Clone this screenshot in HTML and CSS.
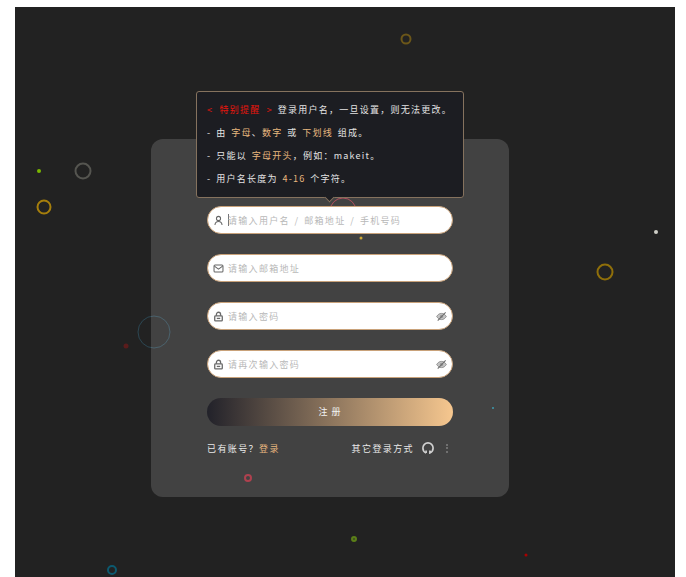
FILE: index.html
```html
<!DOCTYPE html>
<html lang="zh-CN">
<head>
<meta charset="utf-8">
<title>注册</title>
<link rel="stylesheet" href="styles.css">
</head>
<body>
<main class="screen">
  <span class="bubble b1"></span><span class="bubble b2"></span><span class="bubble b3"></span>
  <span class="bubble b4"></span><span class="bubble b5"></span><span class="bubble b6"></span>
  <span class="bubble b7"></span><span class="bubble b8"></span><span class="bubble b9"></span>
  <span class="bubble b10"></span><span class="bubble b11"></span><span class="bubble b12"></span>
  <span class="bubble b13"></span><span class="bubble b14"></span><span class="bubble b15"></span>
  <span class="bubble b16"></span>

  <section class="card">
    <div class="tip">
      <p><span class="red">&lt; 特别提醒 &gt;</span> 登录用户名，一旦设置，则无法更改。</p>
      <p>- 由 <span class="gold">字母</span>、<span class="gold">数字</span> 或 <span class="gold">下划线</span> 组成。</p>
      <p>- 只能以 <span class="gold">字母开头</span>，例如：makeit。</p>
      <p>- 用户名长度为 <span class="gold">4-16</span> 个字符。</p>
    </div>
    <form class="form">
      <div class="field">
        <svg class="icon" viewBox="0 0 16 16"><circle cx="8" cy="5" r="3"/><path d="M2.8 14.5c.3-3.2 2.4-5 5.2-5s4.900 1.800 5.200 5"/></svg>
        <span class="caret"></span><span class="ph">请输入用户名 / 邮箱地址 / 手机号码</span>
      </div>
      <div class="field">
        <svg class="icon" viewBox="0 0 16 16"><rect x="1.500" y="3" width="13" height="10" rx="1.500"/><path d="M2 4.500l6 4.500 6-4.500"/></svg>
        <span class="ph">请输入邮箱地址</span>
      </div>
      <div class="field">
        <svg class="icon lock" viewBox="0 0 16 16"><path d="M5 7V4.800a3 3 0 016 0V7"/><rect x="2.500" y="7" width="11" height="7.500" rx="1.200"/><path d="M5.500 10.800h5"/></svg>
        <span class="ph">请输入密码</span>
        <svg class="eye" viewBox="0 0 16 16"><path class="lid" d="M1 8c1.800-3 4.200-4.500 7-4.500S13.200 5 15 8c-1.800 3-4.200 4.500-7 4.500S2.800 11 1 8z"/><circle class="iris" cx="8" cy="8" r="2.400"/><path class="slash" d="M2.500 14l11.500-12"/></svg>
      </div>
      <div class="field">
        <svg class="icon lock" viewBox="0 0 16 16"><path d="M5 7V4.800a3 3 0 016 0V7"/><rect x="2.500" y="7" width="11" height="7.500" rx="1.200"/><path d="M5.500 10.800h5"/></svg>
        <span class="ph">请再次输入密码</span>
        <svg class="eye" viewBox="0 0 16 16"><path class="lid" d="M1 8c1.800-3 4.200-4.500 7-4.500S13.200 5 15 8c-1.800 3-4.200 4.500-7 4.500S2.800 11 1 8z"/><circle class="iris" cx="8" cy="8" r="2.400"/><path class="slash" d="M2.500 14l11.500-12"/></svg>
      </div>
      <div class="submit">注 册</div>
      <div class="foot">
        <span>已有账号？<span class="gold">登录</span></span>
        <span class="others">
          <span>其它登录方式</span>
          <svg class="gh" viewBox="0 0 16 16"><path d="M5.500 14.600C3 13.600 1.200 11 1.200 8a6.800 6.800 0 0113.600 0c0 3-1.800 5.600-4.300 6.600V11.300"/><path d="M5.500 14.600V11.300"/></svg>
          <span class="dots"><i></i><i></i><i></i></span>
        </span>
      </div>
    </form>
  </section>
</main>
</body>
</html>
```
FILE: styles.css
```css
* { box-sizing: border-box; }
html, body { margin: 0; height: 100%; background: #fff; overflow: hidden; }
body {
  padding: 7px 11px 0 15px;
  font-family: "Noto Sans CJK SC", "Noto Sans", sans-serif;
}
.screen {
  position: relative;
  height: 570px;
  background: #222;
  overflow: hidden;
  padding: 132px 0 0 136px;
}
.bubble {
  position: absolute;
  border-radius: 50%;
  border-style: solid;
  border-color: transparent;
  border-width: 2px;
  transform: translate(-50%, -50%);
}
/* positions are relative to .screen (offset 15,7) */
.b1 { left: 390.5px; top: 31.5px; width: 11px; height: 11px; border-color: #6b5619; }
.b2 { left: 67.5px; top: 163.5px; width: 17px; height: 17px; border-color: #555550; }
.b3 { left: 24px; top: 164px; width: 4px; height: 4px; background: #7ab800; border: 0; }
.b4 { left: 29px; top: 200px; width: 15px; height: 15px; border-color: #a67f0c; }
.b5 { left: 641px; top: 225px; width: 4px; height: 4px; background: #cfcfc8; border: 0; }
.b6 { left: 589.500px; top: 264.500px; width: 17px; height: 17px; border-color: #8f6f0a; }
.b7 { left: 138.500px; top: 325px; width: 33px; height: 33px; border-width: 1.500px; border-color: #2c4753; }
.b8 { left: 110.500px; top: 339px; width: 5px; height: 5px; background: #5a1c1c; border: 0; }
.b9 { left: 97px; top: 562.500px; width: 10px; height: 10px; border-color: #0c5a70; }
.b10 { left: 232.500px; top: 471px; width: 8px; height: 8px; border-color: #a02030; }
.b11 { left: 339px; top: 531.500px; width: 6px; height: 6px; border-color: #5b7f18; background: #3d4a22; }
.b12 { left: 511px; top: 548px; width: 3px; height: 3px; background: #a00; border: 0; }
.b13 { left: 478px; top: 400.500px; width: 2px; height: 2px; background: #1c8aa0; border: 0; }
.b14 { left: 346px; top: 230.500px; width: 3px; height: 3px; background: #c79a10; border: 0; }
.b15 { left: 328px; top: 204px; width: 27px; height: 27px; border-width: 1px; border-color: #a03040; }
.b16 { left: 240px; top: 208px; width: 18px; height: 18px; border-width: 1px; border-color: #6d3a40; }

.card {
  position: relative;
  width: 358px;
  height: 358px;
  padding: 67px 56px 0;
  border-radius: 12px;
  background: rgba(255, 255, 255, .15);
}
.tip {
  position: absolute;
  left: 45px;
  top: -48px;
  width: 268px;
  height: 107px;
  padding: 6px 10px 8px;
  display: flex;
  flex-direction: column;
  justify-content: space-between;
  background: #1c1d22;
  border: 1px solid #85725e;
  border-radius: 3px;
  color: #e4e4e4;
  font-size: 9px;
  letter-spacing: 1.250px;
  word-spacing: 1.500px;
  line-height: 23px;
  z-index: 2;
}
.tip::after {
  content: "";
  position: absolute;
  left: 129px;
  bottom: -4px;
  width: 6px;
  height: 6px;
  background: #1c1d22;
  border-right: 1px solid #85725e;
  border-bottom: 1px solid #85725e;
  transform: rotate(45deg);
}
.tip p { margin: 0; white-space: nowrap; }
.red { color: #e8150c; word-spacing: 3px; }
.gold { color: #e8b77f; }
.form { display: flex; flex-direction: column; }
.field {
  display: flex;
  align-items: center;
  height: 28px;
  margin-bottom: 20px;
  padding: 0 5px;
  background: #fff;
  border: 1px solid #c9a27a;
  border-radius: 14px;
  font-size: 9px;
  letter-spacing: 1.300px;
  word-spacing: 1.500px;
  color: #b8b8b8;
}
.icon {
  flex: none;
  width: 11px;
  height: 11px;
  margin-right: 4px;
  fill: none;
  stroke: #666;
  stroke-width: 1.500;
}
.lock { stroke-width: 1.900; stroke: #6a6a6a; }
.caret { flex: none; width: 1px; height: 12px; margin-right: -1px; background: #777; }
.ph { flex: 1; white-space: nowrap; }
.eye {
  flex: none;
  width: 11px;
  height: 11px;
  fill: none;
}
.lid { fill: #c4c4c4; stroke: #8a8a8a; stroke-width: 1.300; }
.iris { fill: #999; }
.slash { stroke: #6e6e6e; stroke-width: 1.500; }
.submit {
  height: 28px;
  border-radius: 14px;
  background: linear-gradient(to right, #22222a, #f6c78f);
  color: #f2f2f2;
  font-size: 9px;
  letter-spacing: 1px;
  line-height: 28px;
  text-align: center;
}
.foot {
  display: flex;
  justify-content: space-between;
  align-items: center;
  margin-top: 14px;
  height: 16px;
  color: #e8e8e8;
  font-size: 9px;
  letter-spacing: 1.400px;
  white-space: nowrap;
}
.others { display: flex; align-items: center; }
.gh { width: 12px; height: 12px; margin-left: 8px; fill: none; stroke: #d0d0d0; stroke-width: 2.200; }
.dots { display: flex; flex-direction: column; gap: 1.500px; margin: 0 5px 0 12px; }
.dots i { display: block; width: 2px; height: 2px; background: #808080; border-radius: 50%; }
```
